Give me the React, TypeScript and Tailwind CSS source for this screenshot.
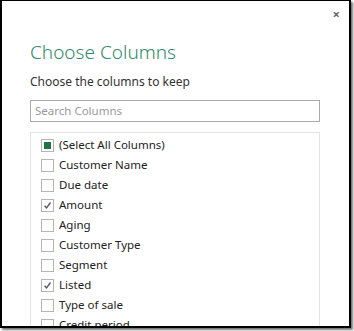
import React from "react";

const items: { label: string; state: "none" | "checked" | "partial" }[] = [
  { label: "(Select All Columns)", state: "partial" },
  { label: "Customer Name", state: "none" },
  { label: "Due date", state: "none" },
  { label: "Amount", state: "checked" },
  { label: "Aging", state: "none" },
  { label: "Customer Type", state: "none" },
  { label: "Segment", state: "none" },
  { label: "Listed", state: "checked" },
  { label: "Type of sale", state: "none" },
  { label: "Credit period", state: "none" },
  { label: "Region", state: "none" },
];

function Box({ state }: { state: "none" | "checked" | "partial" }) {
  return (
    <div className="w-[13px] h-[13px] border border-[#b4b4b4] bg-white flex items-center justify-center shrink-0">
      {state === "partial" && <div className="w-[7px] h-[7px] bg-[#217346]" />}
      {state === "checked" && (
        <svg width="9" height="9" viewBox="0 0 9 9">
          <path d="M1.5 4.8 L3.5 7 L7.5 1.5" fill="none" stroke="#555" strokeWidth="1.3" />
        </svg>
      )}
    </div>
  );
}

export default function App() {
  return (
    <div className="w-[354px] h-[331px] bg-white relative" style={{ fontFamily: '"Noto Sans", "Open Sans", sans-serif' }}>
      <div className="w-[351px] h-[328px] border-t border-l-2 border-r-2 border-b-2 border-black shadow-[2px_2px_2px_rgba(0,0,0,0.55)] bg-white relative overflow-hidden">
        <div className="absolute right-[9px] top-[7px] text-[#666] text-[13px] font-bold leading-none">×</div>
        <div className="pl-[28px] pr-[29px] pt-[38px] flex flex-col">
          <div className="text-[19px] leading-[26px] font-light text-[#2f8a66]">Choose Columns</div>
          <div className="mt-[8px] text-[12px] leading-[17px] text-[#333]">Choose the columns to keep</div>
          <div className="mt-[10px] h-[22px] border border-[#ababab] flex items-center px-[4px] text-[11.5px] text-[#999]">Search Columns</div>
          <div className="mt-[10px] border border-[#e2e2e2] pt-[2px] pl-[10px] flex flex-col">
            {items.map((it) => (
              <div key={it.label} className="h-[20px] flex items-center gap-[5px] text-[11.5px] text-[#222]">
                <Box state={it.state} />
                <span>{it.label}</span>
              </div>
            ))}
          </div>
        </div>
      </div>
    </div>
  );
}
